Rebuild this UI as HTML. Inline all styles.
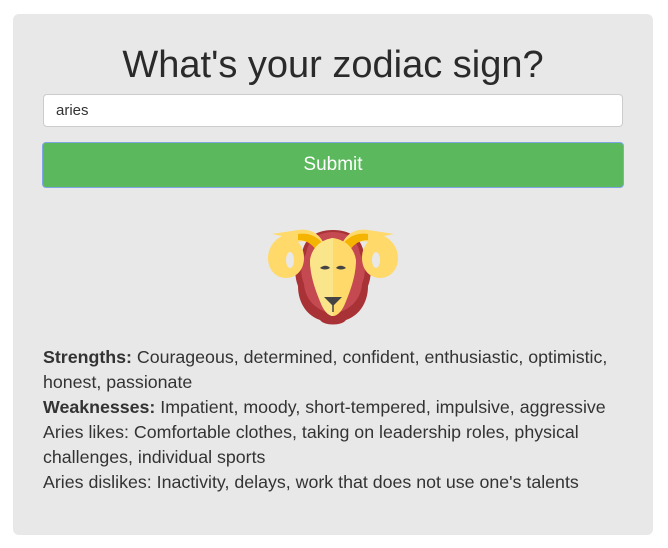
<!DOCTYPE html>
<html><head><style>
body{margin:0;background:#fff;width:668px;height:548px;font-family:"Liberation Sans",sans-serif;color:#333}
.card{position:absolute;left:13px;top:14px;width:640px;height:521px;background:#e8e8e8;border-radius:6px}
h1{position:absolute;left:0;width:640px;top:29px;margin:0;text-align:center;font-weight:normal;font-size:38px;line-height:44px;color:#2a2a2a}
.inp{position:absolute;left:30px;top:80px;background:#fff;border:1px solid #ccc;border-radius:4px;font-size:15px;line-height:31px;padding-left:12px;box-sizing:border-box;width:580px;height:33px}
.btn{position:absolute;left:29px;top:128px;width:582px;height:46px;background:#5cb85c;border:1px solid #7fa6e6;border-radius:4px;box-sizing:border-box;color:#fff;font-size:19px;text-align:center;line-height:44px}
.txt{position:absolute;left:30px;top:331px;font-size:17.8px;line-height:25px;white-space:nowrap;color:#333}
svg{position:absolute;left:255px;top:206px}
</style></head><body>
<div class="card">
<h1>What's your zodiac sign?</h1>
<div class="inp">aries</div>
<div class="btn">Submit</div>
<svg width="130" height="110" viewBox="0 0 130 110">
<!-- mane -->
<path d="M65 10 C48 10 36 18 34 34 C26 42 26 56 30 66 C30 84 40 96 52 100 C56 106 74 106 78 100 C90 96 100 84 100 66 C104 56 104 42 96 34 C94 18 82 10 65 10Z" fill="#a83236"/>
<path d="M65 12 C50 12 40 20 38 34 C32 42 32 54 36 64 C37 78 46 88 58 92 L72 92 C84 88 93 78 94 64 C98 54 98 42 92 34 C90 20 80 12 65 12Z" fill="#c44950"/>
<!-- horns -->
<path d="M4 14 L30 10 C42 8 52 14 56 24 L48 30 C44 22 38 20 30 22 C34 26 36 32 36 38 C36 50 28 58 18 58 C8 58 0 50 0 38 C0 28 6 20 14 16Z" fill="#ffd96a"/>
<ellipse cx="22" cy="40" rx="4" ry="8" fill="#e8e8e8"/>
<path d="M126 14 L100 10 C88 8 78 14 74 24 L82 30 C86 22 92 20 100 22 C96 26 94 32 94 38 C94 50 102 58 112 58 C122 58 130 50 130 38 C130 28 124 20 116 16Z" fill="#ffd96a"/>
<ellipse cx="108" cy="40" rx="4" ry="8" fill="#e8e8e8"/>
<path d="M30 14 C42 12 52 18 56 26 L48 30 C44 24 38 20 30 20Z" fill="#f4b400"/>
<path d="M100 14 C88 12 78 18 74 26 L82 30 C86 24 92 20 100 20Z" fill="#f4b400"/>
<!-- face -->
<path d="M65 18 C52 20 44 28 42 40 C42 56 48 72 54 86 C57 92 61 96 65 96 C69 96 73 92 76 86 C82 72 88 56 88 40 C86 28 78 20 65 18Z" fill="#ffd96a"/>
<path d="M65 18 C52 20 44 28 42 40 C42 56 48 72 54 86 C57 92 61 96 65 96Z" fill="#fae58a"/>
<path d="M52 48 C55 45 60 45 62 48 C59 50 55 50 52 48Z M78 48 C75 45 70 45 68 48 C71 50 75 50 78 48Z" fill="#444"/>
<path d="M56 77 L74 77 L65 86Z" fill="#444"/>
<path d="M65 84 L65 92" stroke="#444" stroke-width="1.5"/>
</svg>
<div class="txt"><b>Strengths:</b> Courageous, determined, confident, enthusiastic, optimistic,<br>honest, passionate<br><b>Weaknesses:</b> Impatient, moody, short-tempered, impulsive, aggressive<br>Aries likes: Comfortable clothes, taking on leadership roles, physical<br>challenges, individual sports<br>Aries dislikes: Inactivity, delays, work that does not use one's talents</div>
</div>
</body></html>
